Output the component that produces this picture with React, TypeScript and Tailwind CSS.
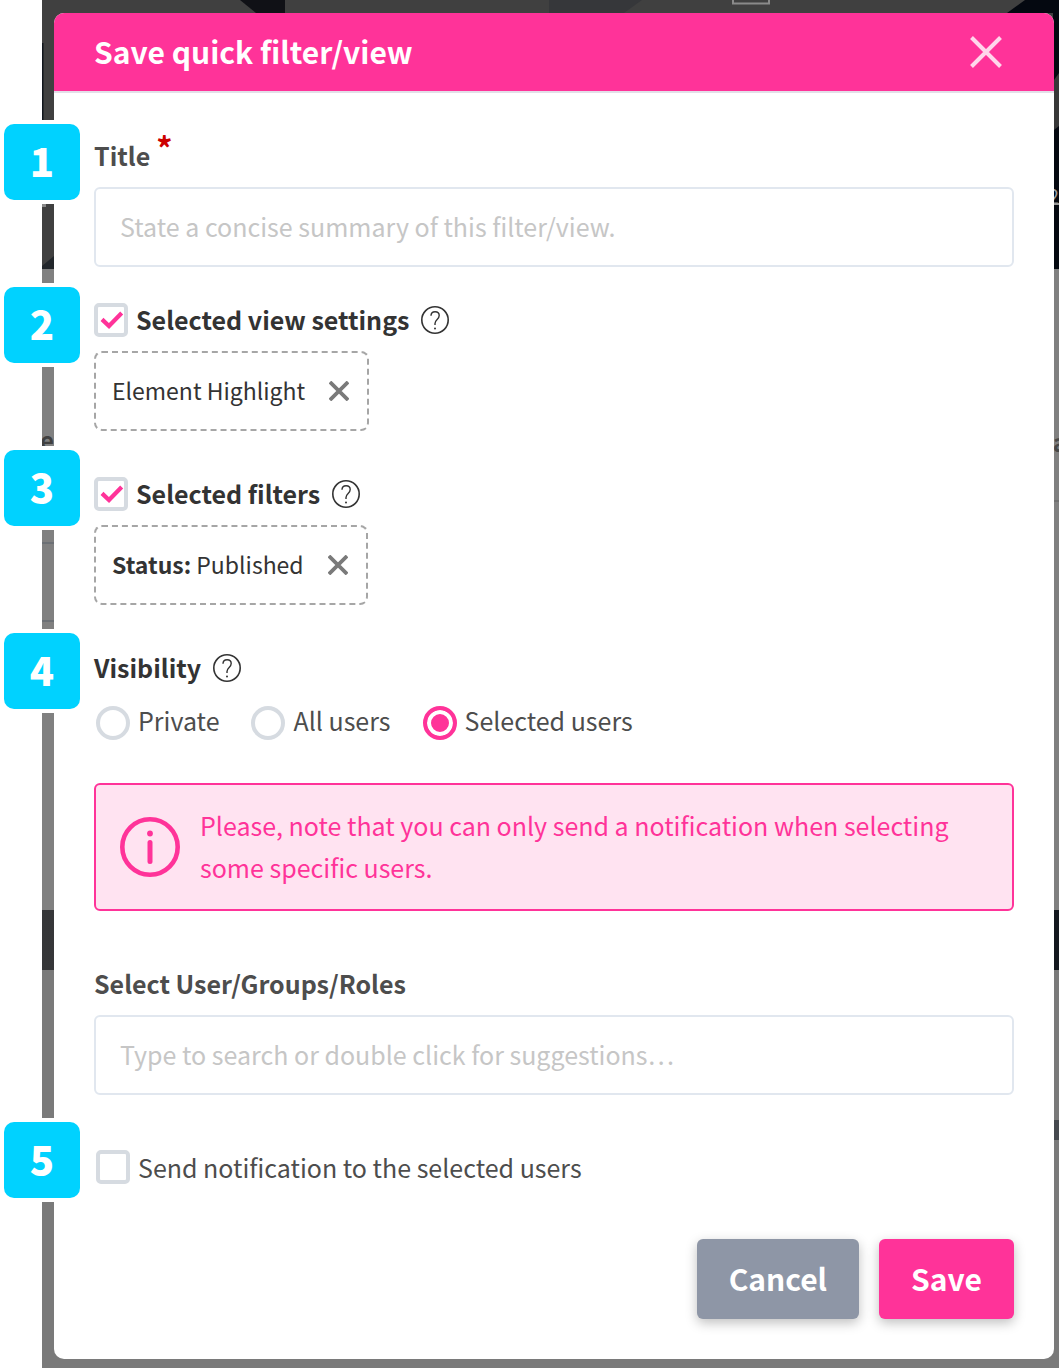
import { ReactNode, useState } from "react";

const visibilityOptions = [
  { value: "private", label: "Private" },
  { value: "all", label: "All users" },
  { value: "selected", label: "Selected users" },
];

function StepBadge({ step, className }: { step: number; className: string }) {
  return (
    <span
      className={`absolute left-[-90px] flex h-[76px] w-[76px] items-center justify-center rounded-[10px] bg-[#00d2ff] pb-1 text-[40px] leading-none font-black text-white shadow-[0_0_0_4px_#fff] ${className}`}
    >
      {step}
    </span>
  );
}

function CrossIcon({ className, strokeWidth }: { className: string; strokeWidth: number }) {
  return (
    <svg viewBox="0 0 32 32" fill="none" stroke="currentColor" strokeWidth={strokeWidth} className={className}>
      <path d="M1.5 1.5 30.5 30.5M30.5 1.5 1.5 30.5" />
    </svg>
  );
}

function HelpButton({ label }: { label: string }) {
  return (
    <button type="button" aria-label={label} className="shrink-0 text-[#333]">
      <svg viewBox="0 0 28 28" fill="none" stroke="currentColor" className="h-7 w-7">
        <circle cx="14" cy="14" r="13.2" strokeWidth="1.6" />
        <path d="M10 9.8c0-2.6 1.7-4.1 4.1-4.1 2.5 0 4.1 1.6 4.1 3.8 0 3.9-4.2 3.9-4.2 8v1.6" strokeWidth="1.4" />
        <circle cx="14" cy="22.5" r="1" fill="currentColor" stroke="none" />
      </svg>
    </button>
  );
}

function Checkbox({
  id,
  checked,
  onChange,
}: {
  id: string;
  checked: boolean;
  onChange: (checked: boolean) => void;
}) {
  return (
    <span className="relative h-[34px] w-[34px] shrink-0">
      <input
        id={id}
        type="checkbox"
        checked={checked}
        onChange={(e) => onChange(e.target.checked)}
        className="block h-full w-full appearance-none rounded-[5px] border-4 border-[#d6dbe1] bg-white"
      />
      {checked ? (
        <svg
          viewBox="0 0 34 34"
          fill="none"
          stroke="#ff3399"
          strokeWidth="4.2"
          className="pointer-events-none absolute inset-0"
        >
          <path d="M8 16.4 15 23 27.7 10" />
        </svg>
      ) : null}
    </span>
  );
}

function Chip({ children, label, onRemove }: { children: ReactNode; label: string; onRemove: () => void }) {
  return (
    <div className="mt-[14px] flex h-20 w-fit items-center gap-6 rounded-lg border-2 border-dashed border-[#a6a6a6] pr-[18px] pl-4 text-[23px] text-[#333]">
      <span className="pb-[2px]">{children}</span>
      <button type="button" aria-label={label} onClick={onRemove} className="text-[#7a7a7a]">
        <CrossIcon className="h-5 w-5" strokeWidth={6} />
      </button>
    </div>
  );
}

// Dimmed page that shows around the edges of the dialog
function Backdrop() {
  return (
    <div aria-hidden="true" className="absolute inset-0 overflow-hidden bg-[#7a7a7a]">
      <div className="h-[269px] bg-[#404040]" />
      <div className="h-[641px] bg-[#808080]" />
      <div className="h-[60px] bg-linear-to-r from-[#363739] to-[#14181f]" />
      <svg viewBox="0 0 760 500" className="absolute top-0 left-0 h-[500px] w-[760px]">
        <path d="M198 0H243V13H214z" fill="#101116" />
        <path d="M507 0H600L582 13H507z" fill="#36373a" />
        <path d="M691 0v3.5h36V0" fill="none" stroke="#8a8a8a" strokeWidth="2" />
        <path d="M0 43h1.500v77H0z" fill="#11161d" />
        <path d="M0 266 12 256v13H0z" fill="#22262b" />
        <path d="M0 204h4v3H0z" fill="#888" />
      </svg>
      <svg viewBox="0 0 60 1368" className="absolute top-0 right-0 h-[1368px] w-[60px]">
        <path d="M8 13 26 0H60V269H54V13z" fill="#040810" />
        <path d="M55 80 60 73V126L55 130z" fill="#383838" />
        <path d="M54 204h6" stroke="#999" strokeWidth="2" />
        <path d="M54 501h6" stroke="#707070" strokeWidth="2" />
        <path d="M54 1120h6v20h-6z" fill="#46494f" />
      </svg>
      <span className="absolute top-[184px] right-0 text-[20px] leading-6 text-[#999]">2</span>
      <span className="absolute top-[426px] right-[-8px] text-[24px] leading-8 font-bold text-[#484848]">a</span>
      <span className="absolute top-[424px] left-[-2px] text-[24px] leading-8 font-bold text-[#404040]">e</span>
      <div className="absolute top-[542px] left-0 h-[2px] w-3 bg-[#6c7075]" />
      <div className="absolute top-[620px] left-0 h-[2px] w-3 bg-[#6c7075]" />
    </div>
  );
}

export default function App() {
  const [useSettings, setUseSettings] = useState(true);
  const [useFilters, setUseFilters] = useState(true);
  const [notify, setNotify] = useState(false);
  const [visibility, setVisibility] = useState("selected");
  const [chips, setChips] = useState({ settings: true, filters: true });

  return (
    <div className="min-h-screen bg-white pl-[42px] font-['Noto_Sans_CJK_SC','Noto_Sans',sans-serif] text-[25px] leading-10">
      <div className="relative min-h-screen pt-[13px] pr-[5px] pb-[9px] pl-3">
        <Backdrop />
        <form
          role="dialog"
          aria-labelledby="dialog-title"
          onSubmit={(e) => e.preventDefault()}
          className="relative rounded-[10px] bg-white"
        >
          <header className="flex h-20 items-center justify-between rounded-t-[10px] border-b-2 border-[#e3dfe8] bg-[#ff3399] bg-clip-padding pr-[52px] pl-10 text-white">
            <h1 id="dialog-title" className="pb-[2px] text-[30px] font-bold">
              Save quick filter/view
            </h1>
            <button type="button" aria-label="Close" className="text-[#ffd6eb]">
              <CrossIcon className="h-8 w-8" strokeWidth={4} />
            </button>
          </header>

          <div className="px-10 pt-11 pb-10 text-[#4d4d4d]">
            <section className="relative">
              <StepBadge step={1} className="top-[-13px]" />
              <label htmlFor="title" className="flex gap-[6px] leading-9 font-bold">
                Title
                <span className="text-[32px] leading-5 text-[#cc0000]">*</span>
              </label>
              <input
                id="title"
                type="text"
                required
                placeholder="State a concise summary of this filter/view."
                className="mt-[14px] block h-20 w-full rounded-md border-2 border-[#e1e7ef] px-6 pb-[2px] placeholder:text-[#c6c6c6]"
              />
            </section>

            <section className="relative mt-9">
              <StepBadge step={2} className="top-[-16px]" />
              <div className="flex h-[34px] items-center text-[#333]">
                <Checkbox id="settings" checked={useSettings} onChange={setUseSettings} />
                <label htmlFor="settings" className="mr-3 ml-2 pb-[2px] font-bold">
                  Selected view settings
                </label>
                <HelpButton label="About view settings" />
              </div>
              {chips.settings ? (
                <Chip label="Remove Element Highlight" onRemove={() => setChips({ ...chips, settings: false })}>
                  Element Highlight
                </Chip>
              ) : null}
            </section>

            <section className="relative mt-[46px]">
              <StepBadge step={3} className="top-[-27px]" />
              <div className="flex h-[34px] items-center text-[#333]">
                <Checkbox id="filters" checked={useFilters} onChange={setUseFilters} />
                <label htmlFor="filters" className="mr-3 ml-2 pb-[2px] font-bold">
                  Selected filters
                </label>
                <HelpButton label="About filters" />
              </div>
              {chips.filters ? (
                <Chip label="Remove status filter" onRemove={() => setChips({ ...chips, filters: false })}>
                  <b>Status:</b> Published
                </Chip>
              ) : null}
            </section>

            <section className="relative mt-[46px]" role="radiogroup" aria-labelledby="visibility">
              <StepBadge step={4} className="top-[-18px]" />
              <div className="flex h-[34px] items-center gap-3 text-[#333]">
                <h2 id="visibility" className="pb-[2px] font-bold">
                  Visibility
                </h2>
                <HelpButton label="About visibility" />
              </div>
              <div className="mt-[21px] flex h-[34px] gap-8 pl-[2px]">
                {visibilityOptions.map((option) => (
                  <label key={option.value} className="flex gap-2 leading-7">
                    <input
                      type="radio"
                      name="visibility"
                      value={option.value}
                      checked={visibility === option.value}
                      onChange={() => setVisibility(option.value)}
                      className="h-[34px] w-[34px] appearance-none rounded-full border-4 border-[#d6dbe1] bg-white checked:border-[#ff3399] checked:bg-[#ff3399] checked:shadow-[inset_0_0_0_4px_#fff]"
                    />
                    {option.label}
                  </label>
                ))}
              </div>
            </section>

            <div
              role="note"
              className="mt-[43px] flex min-h-32 items-center gap-5 rounded-md border-2 border-[#ff3399] bg-[#ffe3f1] px-6 py-4 leading-[42px] text-[#ff3399]"
            >
              <svg viewBox="0 0 60 60" fill="none" stroke="currentColor" className="h-[60px] w-[60px] shrink-0">
                <circle cx="30" cy="30" r="27.700" strokeWidth="4.600" />
                <path d="M30 25.500V44.500" strokeWidth="5" strokeLinecap="round" />
                <circle cx="30" cy="16.500" r="2.900" fill="currentColor" stroke="none" />
              </svg>
              <p className="pb-[2px]">
                Please, note that you can only send a notification when selecting some specific users.
              </p>
            </div>

            <section className="mt-[54px]">
              <label htmlFor="recipients" className="block leading-9 font-bold">
                Select User/Groups/Roles
              </label>
              <input
                id="recipients"
                type="text"
                placeholder="Type to search or double click for suggestions…"
                className="mt-[14px] block h-20 w-full rounded-md border-2 border-[#e1e7ef] px-6 pb-[2px] placeholder:text-[#c6c6c6]"
              />
            </section>

            <section className="relative mt-[55px] flex h-[34px] items-center gap-2 pl-[2px]">
              <StepBadge step={5} className="top-[-28px]" />
              <Checkbox id="notify" checked={notify} onChange={setNotify} />
              <label htmlFor="notify">Send notification to the selected users</label>
            </section>

            <footer className="mt-[55px] flex justify-end gap-5 text-[30px] font-bold text-white">
              <button
                type="button"
                className="h-20 rounded-md bg-[#8e96a6] px-8 pb-[2px] shadow-[0_4px_12px_rgba(0,0,0,0.25)]"
              >
                Cancel
              </button>
              <button
                type="submit"
                className="h-20 rounded-md bg-[#ff3399] px-8 pb-[2px] shadow-[0_4px_12px_rgba(0,0,0,0.25)]"
              >
                Save
              </button>
            </footer>
          </div>
        </form>
      </div>
    </div>
  );
}
